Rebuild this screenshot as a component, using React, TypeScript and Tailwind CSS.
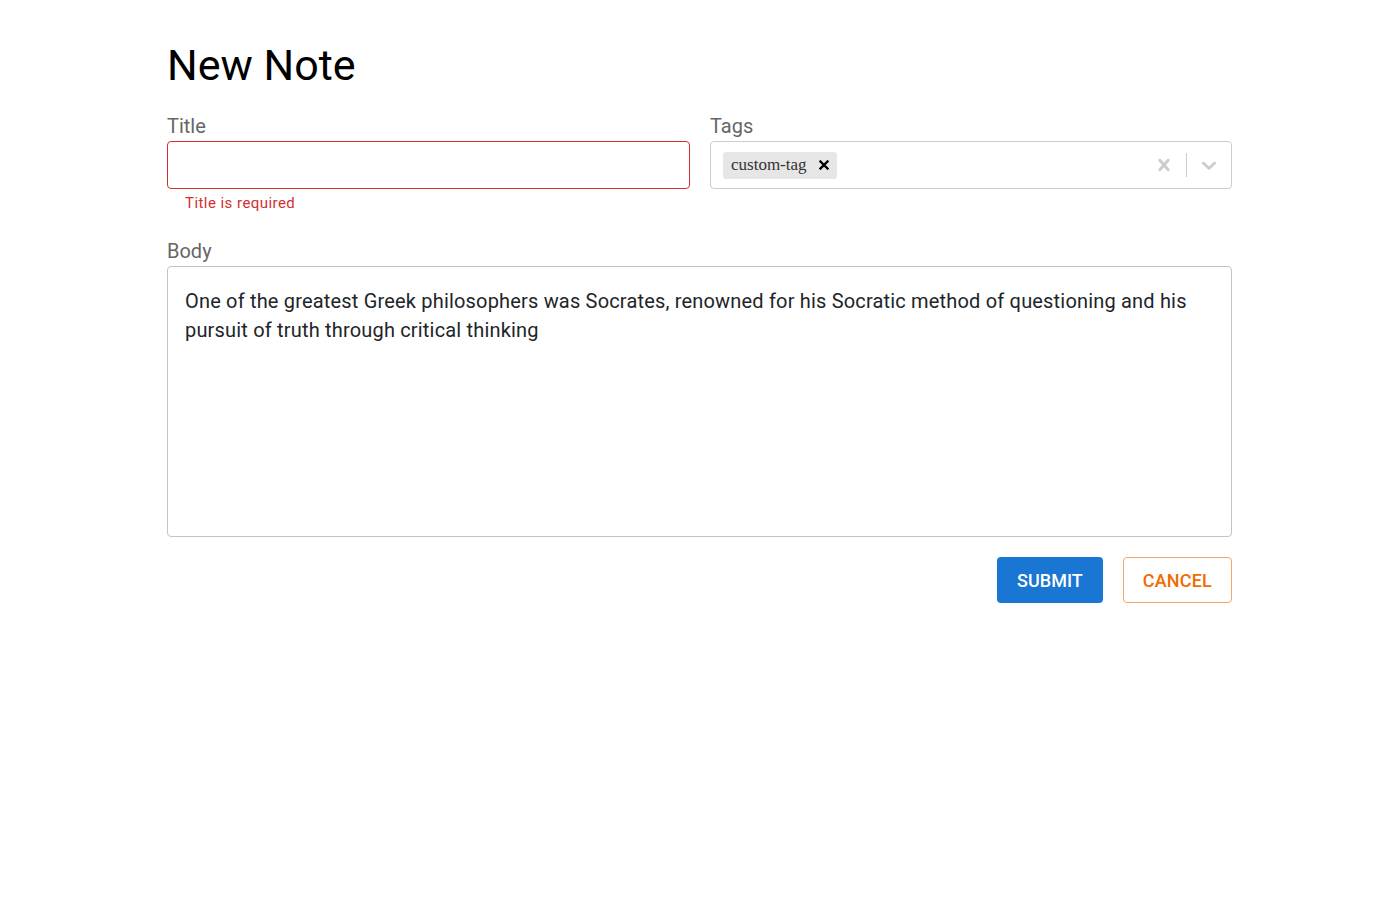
import React, { useState } from 'react';

function CrossIcon({ className }: { className?: string }) {
  return (
    <svg viewBox="0 0 20 20" className={className} fill="currentColor" aria-hidden="true">
      <path d="M14.348 14.849c-0.469 0.469-1.229 0.469-1.697 0l-2.651-3.030-2.651 3.029c-0.469 0.469-1.229 0.469-1.697 0-0.469-0.469-0.469-1.229 0-1.697l2.758-3.15-2.759-3.152c-0.469-0.469-0.469-1.228 0-1.697s1.228-0.469 1.697 0l2.652 3.031 2.651-3.031c0.469-0.469 1.228-0.469 1.697 0s0.469 1.229 0 1.697l-2.758 3.152 2.758 3.15c0.469 0.469 0.469 1.229 0 1.698z" />
    </svg>
  );
}

function ChevronIcon({ className }: { className?: string }) {
  return (
    <svg viewBox="0 0 20 20" className={className} fill="currentColor" aria-hidden="true">
      <path d="M4.516 7.548c0.436-0.446 1.043-0.481 1.576 0l3.908 3.747 3.908-3.747c0.533-0.481 1.141-0.446 1.574 0 0.436 0.445 0.408 1.197 0 1.615-0.406 0.418-4.695 4.502-4.695 4.502-0.217 0.223-0.502 0.335-0.787 0.335s-0.57-0.112-0.789-0.335c0 0-4.287-4.084-4.695-4.502s-0.436-1.17 0-1.615z" />
    </svg>
  );
}

export default function App() {
  const [title, setTitle] = useState('');
  const [tags, setTags] = useState<string[]>(['custom-tag']);
  const [body, setBody] = useState(
    'One of the greatest Greek philosophers was Socrates, renowned for his Socratic method of questioning and his pursuit of truth through critical thinking'
  );

  return (
    <div className="min-h-screen bg-white font-['Roboto',sans-serif] text-[#212529]">
      <div className="mx-auto w-[1065px] pt-[39px]">
        <h1 className="text-[43px] leading-[52px] text-black">New Note</h1>

        <form className="mt-[21px]" onSubmit={(e) => e.preventDefault()}>
          <div className="grid grid-cols-[523px_1fr] gap-x-[20px]">
            {/* Title */}
            <div>
              <label htmlFor="title" className="mb-px block text-[20px] leading-[28px] text-[#666]">
                Title
              </label>
              <input
                id="title"
                value={title}
                onChange={(e) => setTitle(e.target.value)}
                className="block h-[48px] w-full rounded-[4px] border border-[#d32f2f] px-4 text-[20px] outline-none"
              />
              <p className="mt-[4px] pl-[18px] text-[15px] leading-[20px] tracking-[0.45px] text-[#d32f2f]">
                Title is required
              </p>
            </div>

            {/* Tags */}
            <div>
              <label className="mb-px block text-[20px] leading-[28px] text-[#666]">Tags</label>
              <div className="flex h-[48px] w-full items-center rounded-[4px] border border-[#ccc] bg-white">
                <div className="flex flex-1 items-center gap-1 pl-[12px]">
                  {tags.map((tag) => (
                    <div key={tag} className="flex h-[27px] items-center rounded-[3px] bg-[#e6e6e6]">
                      <span className="pl-[8px] pr-[12px] font-['Liberation_Serif',serif] text-[17px] text-[#333]">
                        {tag}
                      </span>
                      <button
                        type="button"
                        onClick={() => setTags(tags.filter((t) => t !== tag))}
                        className="flex h-full items-center pr-[8px] text-black"
                      >
                        <svg viewBox="0 0 10 10" className="h-[10px] w-[10px]" aria-hidden="true">
                          <path d="M1.5 1.5l7 7M8.5 1.5l-7 7" stroke="currentColor" strokeWidth="2.4" strokeLinecap="square" />
                        </svg>
                      </button>
                    </div>
                  ))}
                </div>
                <div className="flex items-center text-[#ccc]">
                  <button type="button" onClick={() => setTags([])} className="p-[10px]">
                    <CrossIcon className="h-[24px] w-[24px]" />
                  </button>
                  <span className="h-[24px] w-px bg-[#ccc]" />
                  <div className="p-[10px]">
                    <ChevronIcon className="h-[24px] w-[24px]" />
                  </div>
                </div>
              </div>
            </div>
          </div>

          {/* Body */}
          <div className="mt-[24px]">
            <label htmlFor="body" className="mb-px block text-[20px] leading-[28px] text-[#666]">
              Body
            </label>
            <textarea
              id="body"
              value={body}
              onChange={(e) => setBody(e.target.value)}
              className="block h-[271px] w-full resize-none rounded-[4px] border border-[#c4c4c4] px-[17px] py-[20px] text-[20px] leading-[29px] tracking-[0.18px] text-[#212529] outline-none"
            />
          </div>

          {/* Actions */}
          <div className="mt-[20px] flex justify-end gap-[20px]">
            <button
              type="submit"
              className="h-[46px] rounded-[4px] bg-[#1976d2] px-[20px] text-[18px] font-medium uppercase text-white"
            >
              Submit
            </button>
            <button
              type="button"
              className="h-[46px] rounded-[4px] border border-[#f5a66b] bg-white px-[19px] text-[18px] font-medium uppercase tracking-[0.2px] text-[#ef6c00]"
            >
              Cancel
            </button>
          </div>
        </form>
      </div>
    </div>
  );
}
